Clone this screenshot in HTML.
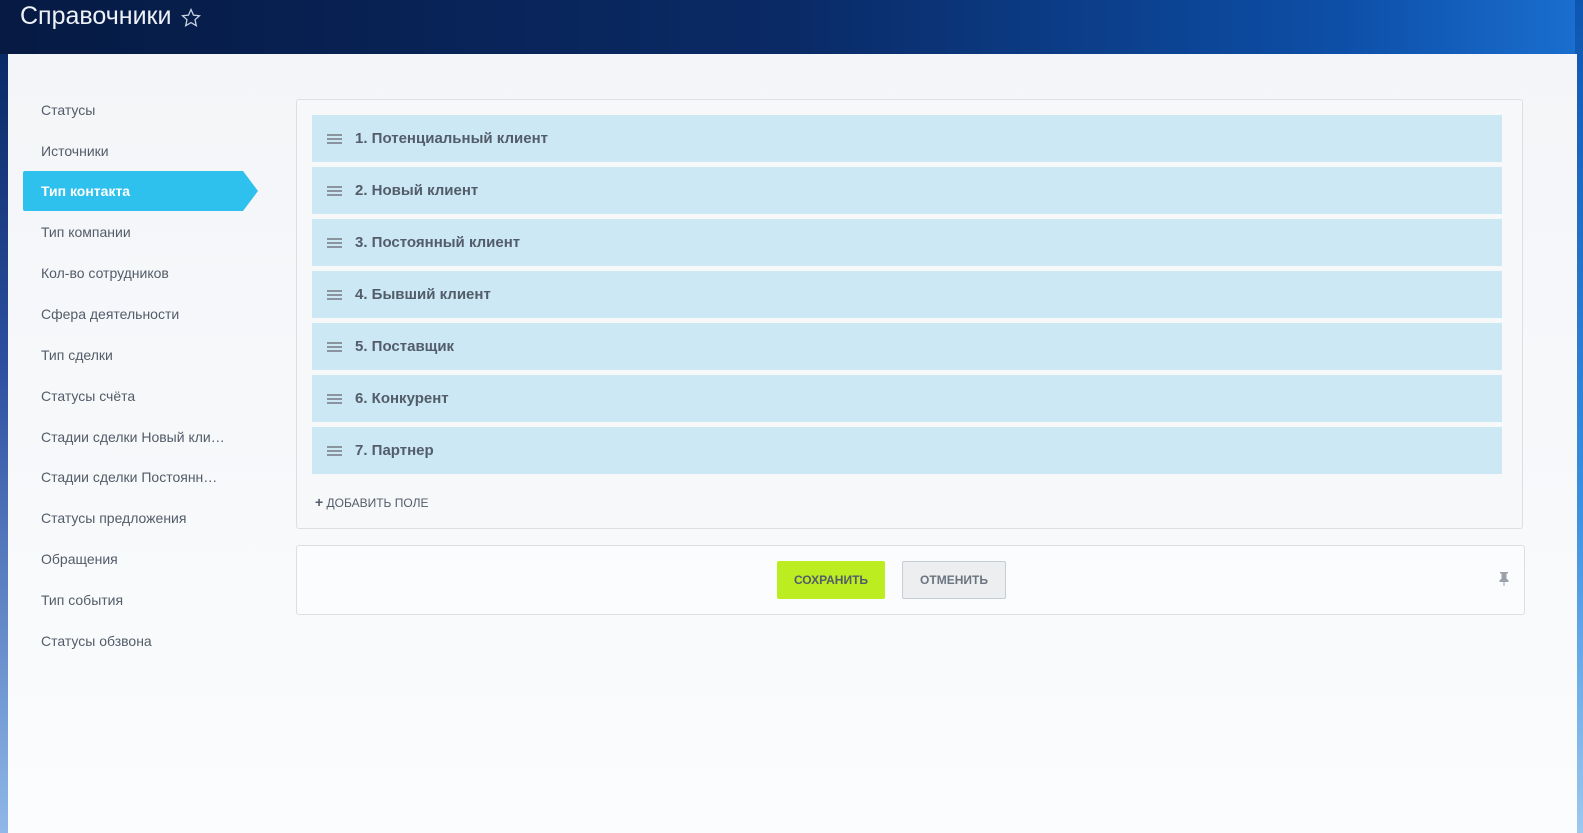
<!DOCTYPE html>
<html><head><meta charset="utf-8"><style>
*{margin:0;padding:0;box-sizing:border-box}
body{width:1583px;height:833px;overflow:hidden;position:relative;font-family:"Liberation Sans",sans-serif;background:linear-gradient(90deg,#061a43 0%,#0a2a66 50%,#0d4fa8 85%,#1a6fd0 100%)}
.rs{position:absolute;right:0;top:0;width:8px;height:833px;background:linear-gradient(180deg,#0d55b0,#3a8fe0 60%,#9cc8f0)}
.ls{position:absolute;left:0;top:54px;width:8px;height:779px;background:linear-gradient(180deg,#0a2a66,#2c4fa0 40%,#8fb8e8)}
h1{position:absolute;left:20px;top:2px;font-weight:normal;font-size:25px;color:#eef2f8}
.star{position:absolute;left:181px;top:8px}
.panel{position:absolute;left:8px;top:54px;width:1569px;height:779px;background:linear-gradient(180deg,#f3f5f8,#f7f9fb 60%,#fbfcfd)}
.menu a{position:absolute;left:41px;font-size:14px;color:#535c69;text-decoration:none;white-space:nowrap}
.act{position:absolute;left:23px;top:171px;width:220px;height:40px;background:#2fc1ed;border-radius:2px 0 0 2px}
.act:after{content:"";position:absolute;left:220px;top:0;border-left:15px solid #2fc1ed;border-top:20px solid transparent;border-bottom:20px solid transparent}
.box{position:absolute;left:296px;top:99px;width:1227px;height:430px;border:1px solid #dcdfe3;border-radius:3px;background:#f6f8fa}
.row{position:absolute;left:312px;width:1190px;height:47px;background:#cbe8f4;font-size:15px;font-weight:bold;color:#535c69;line-height:47px;padding-left:43px}
.row i{position:absolute;left:15px;top:19px;width:15px;height:10px;border-top:2px solid #8a939e;border-bottom:2px solid #8a939e}
.row i:after{content:"";position:absolute;left:0;top:2px;width:15px;height:2px;background:#8a939e}
.add{position:absolute;left:315px;top:494px;font-size:12px;color:#535c69}
.foot{position:absolute;left:296px;top:545px;width:1229px;height:70px;border:1px solid #dcdfe3;border-radius:3px;background:#fbfcfd}
.btn{position:absolute;top:561px;height:38px;font-size:12px;font-weight:bold;color:#535c69;text-align:center;line-height:38px;border-radius:2px}
</style></head><body>
<div class="rs"></div>
<div class="ls"></div>
<h1>Справочники</h1>
<svg class="star" width="20" height="20" viewBox="0 0 20 20"><path d="M10 1.5l2.5 5.6 6 .6-4.5 4 1.3 6-5.3-3.1-5.3 3.1 1.3-6-4.5-4 6-.6z" fill="none" stroke="#c8d2e0" stroke-width="1.3"/></svg>
<div class="panel"></div>
<div class="act"></div>
<div class="menu">
<a style="top:102px">Статусы</a>
<a style="top:143px">Источники</a>
<a style="top:183px;color:#fff;font-weight:bold">Тип контакта</a>
<a style="top:224px">Тип компании</a>
<a style="top:265px">Кол-во сотрудников</a>
<a style="top:306px">Сфера деятельности</a>
<a style="top:347px">Тип сделки</a>
<a style="top:388px">Статусы счёта</a>
<a style="top:429px">Стадии сделки Новый кли…</a>
<a style="top:469px">Стадии сделки Постоянн…</a>
<a style="top:510px">Статусы предложения</a>
<a style="top:551px">Обращения</a>
<a style="top:592px">Тип события</a>
<a style="top:633px">Статусы обзвона</a>
</div>
<div class="box"></div>
<div class="row" style="top:115px"><i></i>1. Потенциальный клиент</div>
<div class="row" style="top:167px"><i></i>2. Новый клиент</div>
<div class="row" style="top:219px"><i></i>3. Постоянный клиент</div>
<div class="row" style="top:271px"><i></i>4. Бывший клиент</div>
<div class="row" style="top:323px"><i></i>5. Поставщик</div>
<div class="row" style="top:375px"><i></i>6. Конкурент</div>
<div class="row" style="top:427px"><i></i>7. Партнер</div>
<div class="add"><b style="font-size:14px">+</b> ДОБАВИТЬ ПОЛЕ</div>
<div class="foot"></div>
<div class="btn" style="left:777px;width:108px;background:#bbed21">СОХРАНИТЬ</div>
<div class="btn" style="left:902px;width:104px;background:#edeef0;border:1px solid #c6cdd3;line-height:36px;color:#6b7480">ОТМЕНИТЬ</div>
<svg style="position:absolute;left:1498px;top:571px" width="12" height="16" viewBox="0 0 12 16"><path d="M2 1h8v1.5H8.5v5l2 2v1.5h-4V15h-1V11h-4V9.5l2-2v-5H2z" fill="#9aa1a9"/></svg>
</body></html>
